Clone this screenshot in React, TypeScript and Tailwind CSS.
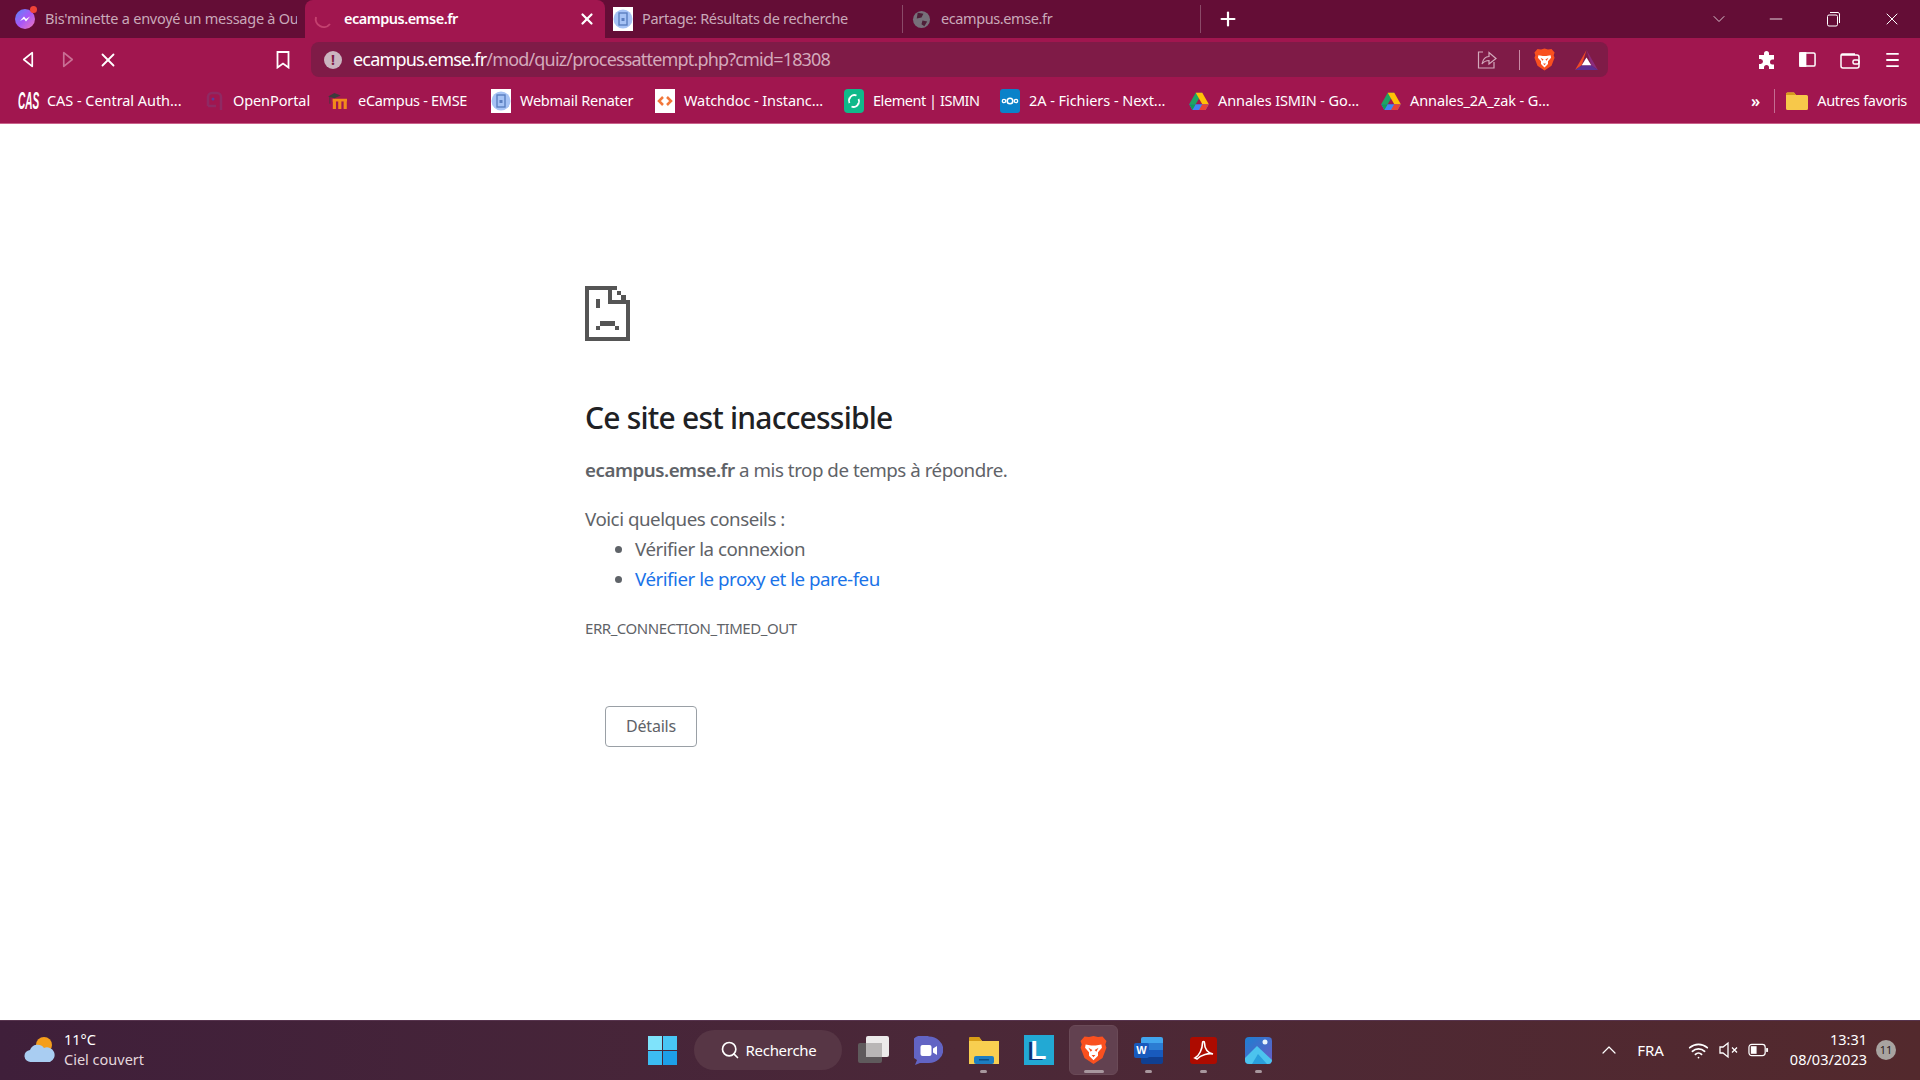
import { Search, X, Plus, ChevronDown, ChevronUp, Minus, Wifi } from 'lucide-react';

const FONT = "font-['Noto_Sans','Open_Sans',sans-serif]";

function BraveIcon({ className }: { className: string }) {
  return (
    <svg viewBox="0 0 24 26" className={className}>
      <path d="M12 0.500L16 1.500L20 1L23.500 5L22.500 8L23.500 11L20 20L12 25.500L4 20L0.500 11L1.500 8L0.500 5L4 1L8 1.500Z" fill="#f9501f" />
      <path d="M5 8L10 9H14L19 8L19.500 11L16 15L16 18L12 22L8 18L8 15L4.500 11Z" fill="#fff" />
      <path d="M7.500 11L11 13L9.500 14.500ZM16.500 11L13 13L14.500 14.500ZM10.300 17.500H13.700L12 19.500Z" fill="#f9501f" />
    </svg>
  );
}

function BatIcon({ className }: { className: string }) {
  return (
    <svg viewBox="0 0 24 21" className={className}>
      <path d="M12 0L0 21L7 16Z" fill="#ef4a27" />
      <path d="M12 0L24 21L17 16Z" fill="#8a2b7c" />
      <path d="M0 21H24L17 16H7Z" fill="#5d2f91" />
      <path d="M12 8L7 16H17Z" fill="#fff" />
    </svg>
  );
}

function DriveIcon() {
  return (
    <svg viewBox="0 0 24 22" className="h-[18px] w-[20px] shrink-0">
      <path d="M8 1H16L12 8L8 15H0Z" fill="#1fa463" />
      <path d="M8 1H16L24 15H16Z" fill="#ffc107" />
      <path d="M5 15H24L20 22H4L0 15Z" fill="#4285f4" />
      <path d="M8 15H0L4 22Z" fill="#0f9d58" />
      <path d="M16 15H24L20 22H12Z" fill="#ea4335" />
    </svg>
  );
}

function PageDoc() {
  return (
    <svg viewBox="0 0 20 24" className="h-[24px] w-[20px] shrink-0">
      <rect width="20" height="24" fill="#fff" />
      <circle cx="10" cy="12" r="9.500" fill="#a6c3f5" />
      <rect x="6" y="6" width="8" height="12" fill="none" stroke="#5b7fc0" strokeWidth="1.400" />
      <rect x="8.500" y="11" width="3" height="3" fill="#5b7fc0" />
    </svg>
  );
}

const bookmarks = [
  { label: 'OpenPortal', track: 'tracking-[-0.1px]', icon: <svg viewBox="0 0 20 24" className="h-[24px] w-[20px] shrink-0"><path d="M4 17V8A4 4 0 0 1 8 4H13A4 4 0 0 1 17 8V21" fill="none" stroke="#8f2a63" strokeWidth="2.500" /><path d="M4 17H12" fill="none" stroke="#8f2a63" strokeWidth="2.500" /><circle cx="9" cy="10" r="1.500" fill="#5a3a9c" /></svg>, width: 'w-[105px]', gap: 'ml-[21px]' },
  { label: 'eCampus - EMSE', track: 'tracking-[-0.3px]', icon: <svg viewBox="0 0 22 20" className="h-[18px] w-[22px] shrink-0"><path d="M7 19V10M13 19V10M19 19V10" stroke="#f18a1c" strokeWidth="3.500" /><path d="M5 9H21" stroke="#f18a1c" strokeWidth="3" /><path d="M0 5L7 1L14 4L7 7Z" fill="#3c3c3c" /><path d="M2 5V13" stroke="#3c3c3c" strokeWidth="1" /></svg>, width: 'w-[144px]', gap: 'ml-[18px]' },
  { label: 'Webmail Renater', track: 'tracking-[-0.25px]', icon: <PageDoc />, width: 'w-[143px]', gap: 'ml-[20px]' },
  { label: 'Watchdoc - Instanc...', track: 'tracking-[-0.1px]', icon: <svg viewBox="0 0 20 24" className="h-[24px] w-[20px] shrink-0"><rect width="20" height="24" fill="#fff" /><path d="M8 8L4 12L8 16M12 8L16 12L12 16" fill="none" stroke="#f2773a" strokeWidth="2.500" /></svg>, width: 'w-[169px]', gap: 'ml-[21px]' },
  { label: 'Element | ISMIN', track: 'tracking-[-0.45px]', icon: <svg viewBox="0 0 20 24" className="h-[24px] w-[20px] shrink-0"><rect width="20" height="24" rx="4" fill="#10b98a" /><path d="M5.500 10A5 5 0 0 1 12.500 6.500M14.500 10A5.500 5.500 0 0 1 14.500 15M14.500 14A5 5 0 0 1 7.500 17.500M5.500 14A5.500 5.500 0 0 1 5.500 9" fill="none" stroke="#fff" strokeWidth="1.800" /></svg>, width: 'w-[136px]', gap: 'ml-[20px]' },
  { label: '2A - Fichiers - Next...', track: 'tracking-[-0.05px]', icon: <svg viewBox="0 0 20 24" className="h-[24px] w-[20px] shrink-0"><rect width="20" height="24" rx="3" fill="#0a82c9" /><circle cx="10" cy="12" r="2.800" fill="none" stroke="#fff" strokeWidth="1.600" /><circle cx="4" cy="12" r="1.700" fill="none" stroke="#fff" strokeWidth="1.300" /><circle cx="16" cy="12" r="1.700" fill="none" stroke="#fff" strokeWidth="1.300" /></svg>, width: 'w-[168px]', gap: 'ml-[20px]' },
  { label: 'Annales ISMIN - Go...', track: 'tracking-[-0.1px]', icon: <DriveIcon />, width: 'w-[170px]', gap: 'ml-[21px]' },
  { label: 'Annales_2A_zak - G...', track: 'tracking-[-0.1px]', icon: <DriveIcon />, width: 'w-[170px]', gap: 'ml-[22px]' },
];

function TabStrip() {
  return (
    <div className="flex h-[38px] shrink-0 items-center bg-[#640d36] text-[14.500px]">
      <div className="flex h-full w-[305px] items-center pl-[15px]">
        <div className="relative h-5 w-5 shrink-0 rounded-full bg-gradient-to-br from-[#3b82f6] via-[#a855f7] to-[#f472b6]">
          <svg viewBox="0 0 20 20" className="h-5 w-5"><path d="M5 12L9 7.500L11 10L15 7.500L11 12.500L9 10Z" fill="#fff" /></svg>
          <span className="absolute right-[-2px] top-[-3px] h-[7px] w-[7px] rounded-full bg-[#f04438]" />
        </div>
        <span className="ml-[10px] w-[252px] overflow-hidden whitespace-nowrap tracking-[-0.25px] text-[#c9a9b9]">Bis'minette a envoyé un message à Ou</span>
      </div>
      <div className="flex h-full w-[300px] items-center rounded-t-lg bg-[#a1164f] pl-[9px] pr-[9px]">
        <svg viewBox="0 0 20 20" className="h-5 w-5 shrink-0"><path d="M2 8A8 8 0 0 0 16 15" fill="none" stroke="#c4416f" strokeWidth="2" /></svg>
        <span className="ml-[10px] font-semibold tracking-[-0.5px] text-white">ecampus.emse.fr</span>
        <X className="ml-auto h-[18px] w-[18px] text-white" strokeWidth={3} />
      </div>
      <div className="flex h-full w-[297px] items-center pl-[8px]">
        <PageDoc />
        <span className="ml-[9px] tracking-[-0.32px] text-[#c9a9b9]">Partage: Résultats de recherche</span>
      </div>
      <div className="flex h-[28px] w-[299px] items-center border-x border-[#8a4a68] pl-[9px]">
        <svg viewBox="0 0 20 20" className="h-[19px] w-[19px] shrink-0"><circle cx="10" cy="10" r="9" fill="#77707a" /><path d="M6 3L12 4L10 8L5 9ZM11 11L16 12L13 17L10 15Z" fill="#4e1f38" /></svg>
        <span className="ml-[10px] tracking-[-0.4px] text-[#c9a9b9]">ecampus.emse.fr</span>
      </div>
      <Plus className="ml-[16px] h-[22px] w-[22px] text-white" strokeWidth={2.400} />
      <div className="ml-auto flex h-full items-center text-white">
        <ChevronDown className="mr-[37px] h-[20px] w-[20px] text-[#d9c3cf]" strokeWidth={1.200} />
        <Minus className="mr-[39px] h-[20px] w-[20px]" strokeWidth={1} />
        <svg viewBox="0 0 16 16" className="mr-[41px] h-[16px] w-[16px]" fill="none" stroke="#fff" strokeWidth="1"><rect x="2.500" y="4" width="10" height="11" rx="1.500" /><path d="M5 1.500H12A2 2 0 0 1 14.500 4V12" /></svg>
        <X className="mr-[18px] h-[20px] w-[20px]" strokeWidth={1.200} />
      </div>
    </div>
  );
}

function Toolbar() {
  return (
    <div className="flex h-[43px] shrink-0 items-center bg-[#a1164f] pl-2 text-white">
      <div className="flex w-10 justify-center">
        <svg viewBox="0 0 16 20" className="h-[17px] w-[14px]" fill="none" stroke="#fff" strokeWidth="2" strokeLinejoin="round"><path d="M13 2V18L3 10Z" /></svg>
      </div>
      <div className="flex w-10 justify-center">
        <svg viewBox="0 0 16 20" className="h-[17px] w-[14px]" fill="none" stroke="#c96f94" strokeWidth="2" strokeLinejoin="round"><path d="M3 2V18L13 10Z" /></svg>
      </div>
      <div className="flex w-10 justify-center">
        <X className="h-[22px] w-[22px]" strokeWidth={2} />
      </div>
      <div className="ml-[135px] flex w-10 justify-center">
        <svg viewBox="0 0 14 18" className="h-[18px] w-[14px]" fill="none" stroke="#fff" strokeWidth="1.800"><path d="M1.500 1H12.500V16.500L7 12.500L1.500 16.500Z" /></svg>
      </div>
      <div className="ml-2 flex h-[35px] w-[1297px] items-center rounded-lg bg-[#7f1b47] pl-[13px] pr-[10px]">
        <span className="flex h-[18px] w-[18px] items-center justify-center rounded-full bg-[#cbb5c0] text-[14px] font-bold leading-none text-[#7f1b47]">!</span>
        <span className="ml-[11px] whitespace-nowrap text-[18px] tracking-[-0.82px] text-white">
          ecampus.emse.fr<span className="text-[#d3a9bb]">/mod/quiz/processattempt.php?cmid=18308</span>
        </span>
        <div className="ml-auto flex items-center">
          <svg viewBox="0 0 20 20" className="h-[20px] w-[20px]" fill="none" stroke="#d3a9bb" strokeWidth="1.200"><path d="M6 2H1.500V18H17V12" /><path d="M5 14C6 9 9 6.500 12 6.500V2.500L19 8.500L12 14V10.500C9 10.500 7 11.500 5 14Z" /></svg>
          <span className="ml-[22px] h-[20px] w-px bg-[#c98aa5]" />
          <BraveIcon className="ml-[14px] h-[23px] w-[21px]" />
          <BatIcon className="ml-[20px] h-[20px] w-[23px]" />
        </div>
      </div>
      <div className="ml-[139px] flex w-10 justify-center">
        <svg viewBox="0 0 20 20" className="h-[20px] w-[20px]" fill="#fff"><path d="M7 3.500A2.500 2.500 0 0 1 12 3.500V5H17V9.500H15.500A2.500 2.500 0 0 0 15.500 14.500H17V19H12V17.500A2.500 2.500 0 0 0 7 17.500V19H2V14H3.500A2.500 2.500 0 0 0 3.500 9H2V5H7Z" /></svg>
      </div>
      <div className="flex w-10 justify-center">
        <svg viewBox="0 0 18 18" className="h-[17px] w-[17px]" fill="none" stroke="#fff" strokeWidth="1.600"><rect x="1" y="2" width="16" height="14" rx="1.500" /><rect x="1" y="2" width="6" height="14" fill="#fff" /></svg>
      </div>
      <div className="ml-[3px] flex w-10 justify-center">
        <svg viewBox="0 0 20 18" className="h-[18px] w-[20px]" fill="none" stroke="#fff" strokeWidth="1.500"><path d="M15 3H2.500A1.500 1.500 0 0 0 1 4.500V15A2 2 0 0 0 3 17H17A2 2 0 0 0 19 15V6A2 2 0 0 0 17 4H1" /><rect x="13" y="9" width="6" height="4" rx="1.500" /></svg>
      </div>
      <div className="ml-[2px] flex w-10 justify-center">
        <svg viewBox="0 0 14 18" className="h-[16px] w-[13px]" stroke="#fff" strokeWidth="2"><path d="M0 2H14M0 9H14M0 16H14" /></svg>
      </div>
    </div>
  );
}

function BookmarksBar() {
  return (
    <div className="flex h-[43px] shrink-0 items-center border-b border-[#c9638b] bg-[#a1164f] pb-[2px] text-[14.500px] text-white">
      <div className="ml-[18px] flex w-[165px] items-center">
        <span className="w-[22px] shrink-0 origin-left scale-x-[0.42] font-['Liberation_Sans',sans-serif] text-[24px] font-bold italic leading-none text-white">CAS</span>
        <span className="ml-[7px] whitespace-nowrap tracking-[-0.05px]">CAS - Central Auth...</span>
      </div>
      {bookmarks.map((b) => (
        <div key={b.label} className={`flex items-center ${b.gap} ${b.width}`}>
          {b.icon}
          <span className={`ml-[9px] whitespace-nowrap ${b.track}`}>{b.label}</span>
        </div>
      ))}
      <span className="ml-auto text-[16px] font-semibold">»</span>
      <span className="ml-[14px] h-[24px] w-px bg-[#c46d92]" />
      <svg viewBox="0 0 22 18" className="ml-[11px] h-[18px] w-[22px]"><path d="M0 2A1.500 1.500 0 0 1 1.500 0.500H8L10 3H20.500A1.500 1.500 0 0 1 22 4.500V16.500A1.500 1.500 0 0 1 20.500 18H1.500A1.500 1.500 0 0 1 0 16.500Z" fill="#f7c84a" /><path d="M0 2A1.500 1.500 0 0 1 1.500 0.500H8L10 3H0Z" fill="#d69a1e" /></svg>
      <span className="ml-[9px] mr-[13px] whitespace-nowrap tracking-[-0.3px]">Autres favoris</span>
    </div>
  );
}

function ErrorPage() {
  return (
    <main className="min-h-0 flex-1 bg-white pl-[585px] pt-[162px] text-[18.750px] leading-[30px] tracking-[-0.48px] text-[#5f6368]">
      <svg viewBox="0 0 45 55" className="h-[55px] w-[45px]" fill="#555" shapeRendering="crispEdges">
        <path d="M0 0H32V4H27V14H36V9H32V5H36V9H41V14H45V55H0ZM4 4V51H41V18H23V4Z" fillRule="evenodd" />
        <rect x="11" y="13" width="4" height="9" />
        <rect x="15" y="35" width="15" height="5" />
        <rect x="11" y="40" width="4" height="4" />
        <rect x="30" y="40" width="4" height="4" />
      </svg>
      <h1 className="mt-[59px] text-[30px] font-medium leading-[36px] tracking-[-0.78px] text-[#202124]">Ce site est inaccessible</h1>
      <p className="mt-[19px]"><strong className="font-semibold">ecampus.emse.fr</strong> a mis trop de temps à répondre.</p>
      <p className="mt-[19px]">Voici quelques conseils :</p>
      <ul className="list-disc pl-[50px]">
        <li>Vérifier la connexion</li>
        <li><span className="text-[#1a73e8]">Vérifier le proxy et le pare-feu</span></li>
      </ul>
      <p className="mt-6 text-[15px] leading-5 tracking-[-0.45px]">ERR_CONNECTION_TIMED_OUT</p>
      <button className="ml-5 mt-[68px] h-[41px] w-[92px] rounded-[4px] border border-[#9aa0a6] pb-[2px] text-[16px] tracking-[-0.2px] text-[#5f6368]">Détails</button>
    </main>
  );
}

function Slot({ children, bar, wide }: { children: React.ReactNode; bar?: boolean; wide?: boolean }) {
  return (
    <div className="relative flex h-[50px] w-[55px] items-center justify-center">
      {wide && <span className="absolute inset-y-0 left-[3px] right-[3px] rounded-md border border-[#6a4a57] bg-[#624150]" />}
      <span className="relative flex items-center justify-center">{children}</span>
      {bar && <span className={`absolute bottom-[2px] h-[3px] rounded-full bg-[#a8979e] ${wide ? 'w-5' : 'w-[7px]'}`} />}
    </div>
  );
}

function Taskbar() {
  return (
    <div className="flex h-[60px] shrink-0 items-center border-t border-[#57344e] bg-gradient-to-r from-[#3f1f3a] via-[#4b2838] to-[#53292d] pb-px text-white">
      <div className="flex w-[635px] items-center pl-[24px]">
        <svg viewBox="0 0 32 28" className="h-[28px] w-[32px]">
          <circle cx="20" cy="9" r="8" fill="#f59e1b" />
          <path d="M7 26A6 6 0 0 1 6 14A8 8 0 0 1 20 12A6.500 6.500 0 0 1 26 26Z" fill="#a9cdf2" />
        </svg>
        <div className="mb-[2px] ml-[8px] text-[14.500px] leading-[20px]">
          <div>11°C</div>
          <div className="text-[#e4d6dc]">Ciel couvert</div>
        </div>
      </div>
      <Slot>
        <div className="grid h-[29px] w-[29px] grid-cols-2 gap-[1px]">
          <span className="bg-[#7fe3fb]" />
          <span className="bg-[#48c6f5]" />
          <span className="bg-[#3cbcf2]" />
          <span className="bg-[#1d9fe8]" />
        </div>
      </Slot>
      <div className="ml-1 flex h-[40px] w-[148px] items-center justify-center rounded-full bg-[#573645] text-[15px] tracking-[-0.3px]">
        <Search className="h-[20px] w-[20px]" strokeWidth={2} />
        <span className="ml-[6px]">Recherche</span>
      </div>
      <div className="ml-1 flex items-center">
        <Slot>
          <svg viewBox="0 0 31 28" className="h-[28px] w-[31px]"><rect x="0" y="7" width="24" height="20" rx="2" fill="#5f5a5c" /><rect x="8" y="0" width="23" height="21" rx="2" fill="#eceaea" /><rect x="8" y="7" width="16" height="14" fill="#b9b6b6" /></svg>
        </Slot>
        <Slot>
          <svg viewBox="0 0 29 29" className="h-[29px] w-[29px]"><path d="M15 0.500A14 13 0 0 1 15 27H6L1 29L3 24A13 13 0 0 1 15 0.500Z" fill="#6264c4" /><rect x="6.500" y="9" width="11" height="11" rx="2" fill="#fff" /><path d="M19 12.500L23 10V19L19 16.500Z" fill="#fff" /></svg>
        </Slot>
        <Slot bar>
          <svg viewBox="0 0 30 27" className="h-[27px] w-[30px]"><path d="M0 1.500A1.500 1.500 0 0 1 1.500 0H10L13 4H30V27H0Z" fill="#f8cf50" /><path d="M0 1.500A1.500 1.500 0 0 1 1.500 0H10L13 4H0Z" fill="#d89e16" /><rect x="5" y="19" width="20" height="8" rx="2" fill="#1d7ec2" /><rect x="10" y="22" width="10" height="1.500" fill="#0b4f86" /></svg>
        </Slot>
        <Slot>
          <span className="flex h-[30px] w-[30px] items-center justify-center bg-[#22a9d4] font-['Liberation_Sans',sans-serif] text-[26px] font-bold leading-none text-white [text-shadow:-3px_1px_0_#0b2f7a]">L</span>
        </Slot>
        <Slot wide bar>
          <BraveIcon className="h-[30px] w-[27px]" />
        </Slot>
        <Slot bar>
          <div className="relative h-[27px] w-[29px]">
            <div className="ml-[7px] grid h-full grid-rows-4">
              <span className="rounded-t-[2px] bg-[#41a5ee]" />
              <span className="bg-[#2b7cd3]" />
              <span className="bg-[#185abd]" />
              <span className="rounded-b-[2px] bg-[#103f91]" />
            </div>
            <span className="absolute left-0 top-[6px] flex h-[15px] w-[15px] items-center justify-center rounded-[2px] bg-[#185abd] font-['Liberation_Sans',sans-serif] text-[11px] font-bold leading-none">W</span>
          </div>
        </Slot>
        <Slot bar>
          <svg viewBox="0 0 27 27" className="h-[27px] w-[27px]"><rect width="27" height="27" rx="3" fill="#ad0b00" /><path d="M5 21C9 19 12.500 12 12.500 6C12.500 4 14.500 4 14.500 6C14.500 12 18 16.500 23 17C19 16 11 17.500 7 22Z" fill="none" stroke="#fff" strokeWidth="1.600" /></svg>
        </Slot>
        <Slot bar>
          <svg viewBox="0 0 27 27" className="h-[27px] w-[27px]"><defs><linearGradient id="sky" x1="0" y1="0" x2="1" y2="1"><stop offset="0" stopColor="#1d7fd1" /><stop offset="1" stopColor="#6a5bc4" /></linearGradient></defs><rect width="27" height="27" rx="4" fill="url(#sky)" /><path d="M0 21L12 9L27 23V23A4 4 0 0 1 23 27H4A4 4 0 0 1 0 23Z" fill="#4cc4ee" /><path d="M7 27L13 17L22 27Z" fill="#2a9fdc" /><circle cx="20" cy="5" r="2.500" fill="#e9f4fb" /></svg>
        </Slot>
      </div>
      <div className="flex flex-1 items-center justify-end pr-[24px] text-[15px]">
        <ChevronUp className="h-[24px] w-[24px]" strokeWidth={1.200} />
        <span className="ml-[16px]">FRA</span>
        <Wifi className="ml-[24px] h-[21px] w-[21px]" strokeWidth={2} />
        <svg viewBox="0 0 20 20" className="ml-[10px] h-[20px] w-[20px]" fill="none" stroke="#fff" strokeWidth="1.300"><path d="M1 7H4L9 3V17L4 13H1Z" /><path d="M13 7.500L18 12.500M18 7.500L13 12.500" /></svg>
        <svg viewBox="0 0 22 14" className="ml-[9px] h-[14px] w-[21px]" fill="none" stroke="#fff" strokeWidth="1.300"><rect x="1" y="1" width="17" height="12" rx="3" /><rect x="3" y="3" width="6" height="8" fill="#fff" stroke="none" /><path d="M20 5V9" strokeWidth="2" /></svg>
        <div className="mb-[2px] ml-[21px] text-right text-[14.500px] leading-[20px]">
          <div>13:31</div>
          <div>08/03/2023</div>
        </div>
        <span className="ml-[9px] flex h-[20px] w-[20px] items-center justify-center rounded-full bg-[#a8a3a0] text-[11px] text-[#2b1a1c]">11</span>
      </div>
    </div>
  );
}

export default function App() {
  return (
    <div className={`flex h-[1080px] w-[1920px] flex-col overflow-hidden bg-white ${FONT}`}>
      <TabStrip />
      <Toolbar />
      <BookmarksBar />
      <ErrorPage />
      <Taskbar />
    </div>
  );
}
